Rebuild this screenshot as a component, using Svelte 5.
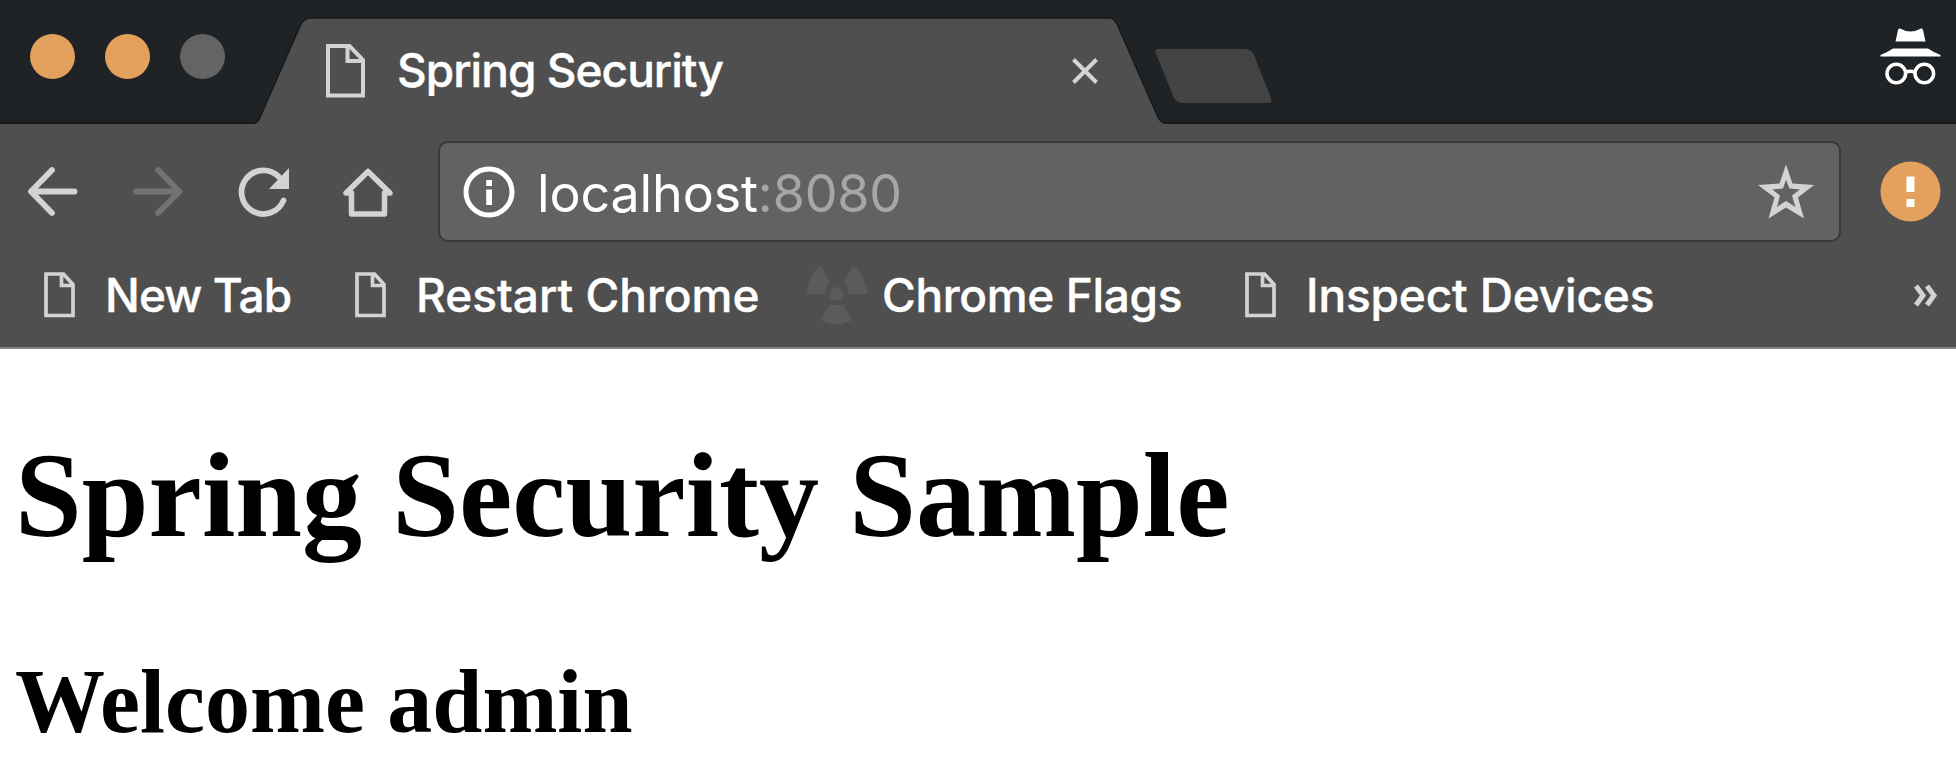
<script>
  const bookmarks = [
    { label: 'New Tab', icon: 'page', width: 311, spacing: -0.9 },
    { label: 'Restart Chrome', icon: 'page', width: 447, spacing: 0 },
    { label: 'Chrome Flags', icon: 'flags', width: 443, spacing: -0.35 },
    { label: 'Inspect Devices', icon: 'page', width: 440, spacing: -0.15 }
  ];
</script>

<div class="window">
  <header class="titlebar">
    <div class="lights">
      <span class="light"></span>
      <span class="light"></span>
      <span class="light off"></span>
    </div>
    <div class="tab">
      <svg class="tab-shape" width="910" height="107" viewBox="255 17 910 107">
        <path d="M255 124 Q259 122 261 116 L300 27 Q304 18 310 18 H1109 Q1114 18 1117 24 L1157 116 Q1160 123 1165 124Z" fill="#4f4f4f" />
        <path d="M255 123 Q259 121 261 115 L300 26 Q304 18 310 18 H1109 Q1114 18 1117 24 L1157 115 Q1160 122 1165 123" fill="none" stroke="#171a1c" stroke-width="1.5" />
      </svg>
      <svg class="tab-page" width="39" height="54" viewBox="0 0 39 54">
        <path d="M2 2H23.500L37 16V51.500H2Z M21.500 2V17H37" fill="none" stroke="#d3d3d3" stroke-width="4" />
      </svg>
      <span class="tab-title">Spring Security</span>
      <svg class="close" width="28" height="28" viewBox="0 0 28 28">
        <path d="M2.500 2.500L25.500 25.500M25.500 2.500L2.500 25.500" stroke="#d3d3d3" stroke-width="4" />
      </svg>
    </div>
    <svg class="new-tab" width="120" height="56" viewBox="1154 48 120 56">
      <path d="M1158 49H1245Q1251 49 1254 55L1271 98Q1273 103 1268 103H1183Q1177 103 1174 98L1156 54Q1154 49 1158 49Z" fill="#434343" />
    </svg>
    <svg class="incognito" width="62" height="58" viewBox="1880 28 62 58">
      <path d="M1900 28.500Q1910.500 34.500 1921 28.500Q1922.500 28 1923 30L1925.500 41.500H1895.500L1898 30Q1898.500 28 1900 28.500Z M1893 48.500H1928Q1933 52 1940.500 55V56.500H1880.500V55Q1888 52 1893 48.500Z" fill="#fff" />
      <g fill="none" stroke="#fff" stroke-width="3.500">
        <circle cx="1896.300" cy="73.500" r="9.300" />
        <circle cx="1924.300" cy="73.500" r="9.300" />
        <path d="M1905.500 72.500Q1910.300 70 1915 72.500" />
      </g>
    </svg>
  </header>

  <div class="toolbar">
    <svg width="50" height="50" viewBox="28 166 50 50">
      <path d="M74.500 190.500H32M52 169L31 190.500L52 212" fill="none" stroke="#d3d3d3" stroke-width="5.800" stroke-linecap="round" stroke-linejoin="round" />
    </svg>
    <svg width="50" height="50" viewBox="133 166 50 50">
      <path d="M136 190.500H178M158 169L179.500 190.500L158 212" fill="none" stroke="#737373" stroke-width="5.800" stroke-linecap="round" stroke-linejoin="round" />
    </svg>
    <svg width="50" height="50" viewBox="238 166 50 50">
      <path d="M283.500 199.500A21.800 21.800 0 1 1 279 176" fill="none" stroke="#d3d3d3" stroke-width="5.800" stroke-linecap="round" />
      <path d="M289 167V188H269Z" fill="#d3d3d3" />
    </svg>
    <svg width="50" height="50" viewBox="343 166 50 50">
      <path d="M346 192H351.500V213H384.500V192H390L368 170.500Z" fill="none" stroke="#d3d3d3" stroke-width="5.500" stroke-linejoin="round" />
    </svg>
    <div class="omnibox">
      <svg width="52" height="52" viewBox="0 0 52 52">
        <circle cx="26" cy="26" r="23" fill="none" stroke="#fff" stroke-width="5" />
        <path d="M23.200 14H29V20H23.200ZM23.200 23.500H29V39H23.200Z" fill="#fff" />
      </svg>
      <span class="url">localhost<span class="port">:8080</span></span>
      <svg class="star" width="56" height="56" viewBox="1758 163 56 56">
        <path fill-rule="evenodd" d="M1786 163.500L1792.500 182.500L1814 184L1798 196.500L1804 217.500L1786 206.500L1768.500 217.500L1774.500 196.500L1758 184L1779.500 182.500ZM1786 179L1783 187.500L1772.500 188.500L1780 194.500L1777 206L1786 200L1795.500 206L1792 194.500L1800 188.500L1789.500 187.500Z" fill="#d3d3d3" />
      </svg>
    </div>
    <svg class="alert" width="61" height="61" viewBox="0 0 61 61">
      <circle cx="30.500" cy="30.500" r="30" fill="#e4a15e" />
      <path d="M26.500 15.500H34.500V31H26.500ZM26.500 38H34.500V46H26.500Z" fill="#fff" />
    </svg>
  </div>

  <nav class="bookmarks">
    {#each bookmarks as item}
      <div class="bookmark {item.icon}" style="width: {item.width}px; letter-spacing: {item.spacing}px">
        {#if item.icon === 'page'}
          <svg width="31" height="46" viewBox="0 0 31 46">
            <path d="M2 2H19.500L29 12.500V43.500H2Z M17.500 2V13.500H29" fill="none" stroke="#d3d3d3" stroke-width="3.700" />
          </svg>
        {:else}
          <svg width="62" height="62" viewBox="806 263 62 62">
            <g fill="#5b5b5b">
              <circle cx="836.500" cy="293" r="7" />
              <path d="M820.500 264L829.500 281Q826 286 825 293H806.500Q807 276 820.500 264ZM853 264L844.500 281Q848 286 849 293H867.500Q866 276 853 264ZM829.500 304H844L852 319Q836 328 821 319Z" />
            </g>
          </svg>
        {/if}
        <span>{item.label}</span>
      </div>
    {/each}
    <svg class="more" width="24" height="22" viewBox="1914 282 24 22">
      <path d="M1916 284L1923 293.500L1916 303M1927 284L1934 293.500L1927 303" fill="none" stroke="#d3d3d3" stroke-width="5" />
    </svg>
  </nav>

  <main>
    <h1>Spring Security Sample</h1>
    <h2>Welcome admin</h2>
  </main>
</div>

<style>
  :global(body) { margin: 0; background: #fff; }
  .window { width: 1956px; height: 777px; overflow: hidden; background: #fff; font-family: Inter, "Liberation Sans", sans-serif; color: #fff; white-space: nowrap; }
  svg { display: block; flex: none; overflow: visible; }
  .titlebar { height: 124px; box-sizing: border-box; display: flex; background: #1f2326; border-bottom: 2px solid #171a1c; }
  .lights { width: 255px; box-sizing: border-box; padding: 34px 0 0 30px; display: flex; gap: 30px; }
  .light { width: 45px; height: 45px; border-radius: 50%; background: #e4a15e; }
  .light.off { background: #646464; }
  .tab { position: relative; width: 910px; height: 107px; margin-top: 17px; box-sizing: border-box; padding: 0 66px 0 71px; display: flex; align-items: flex-start; }
  .tab-shape { position: absolute; left: 0; top: 0; }
  .tab-page { position: relative; margin-top: 27px; }
  .tab-title { position: relative; margin: 23px 0 0 32px; font-size: 46px; line-height: 60px; font-weight: 500; letter-spacing: -0.97px; -webkit-text-stroke: 0.4px #fff; }
  .close { position: relative; margin: 40px 0 0 auto; }
  .new-tab { margin: 48px 0 0 -11px; }
  .incognito { margin: 28px 14px 0 auto; }
  .toolbar { height: 118px; box-sizing: border-box; padding: 17px 15px 0 28px; display: flex; align-items: center; background: #4f4f4f; gap: 55px; }
  .omnibox { flex: none; margin-left: -10px; width: 1403px; height: 101px; box-sizing: border-box; border: 2px solid #383939; border-radius: 10px; background: #626262; display: flex; align-items: center; padding: 0 25px 0 23px; }
  .url { margin: 4px 0 0 22px; font-size: 52px; line-height: 64px; font-weight: 400; letter-spacing: -0.15px; }
  .port { color: #a4a6a9; }
  .star { margin-left: auto; }
  .alert { margin-left: -16px; }
  .bookmarks { height: 107px; box-sizing: border-box; background: #4f4f4f; border-bottom: 2px solid #858585; padding: 1px 18px 0 44px; display: flex; align-items: center; }
  .bookmark { display: flex; align-items: center; gap: 30px; font-size: 46px; line-height: 60px; font-weight: 500; -webkit-text-stroke: 0.4px #fff; }
  .flags { gap: 14px; padding-left: 4px; box-sizing: border-box; }
  .more { margin-left: auto; }
  main { padding: 78px 0 0 15px; color: #000; font-family: "Liberation Serif", serif; }
  h1 { margin: 0; font-size: 120px; line-height: 138px; letter-spacing: 0.05px; }
  h2 { margin: 85px 0 0; font-size: 90px; line-height: 104px; }
</style>
